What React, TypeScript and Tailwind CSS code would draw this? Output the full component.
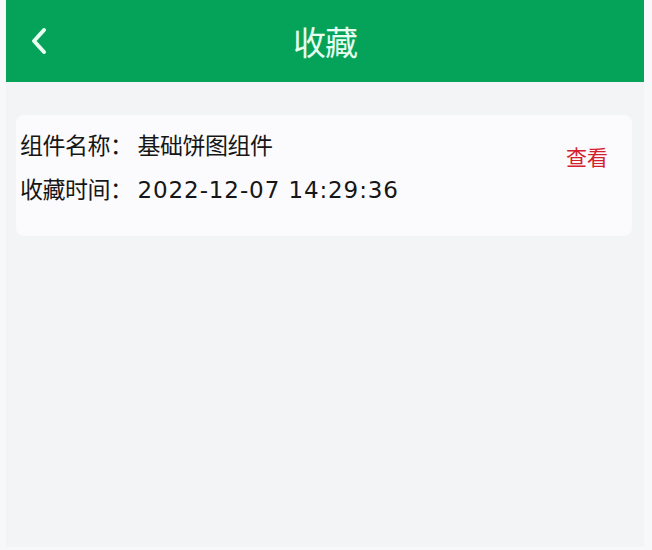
export default function App() {
  return (
    <div className="w-[652px] h-[550px] bg-[#f7f8fa] pl-[6px] pr-[8px] pb-[3px] font-['Noto_Sans_CJK_SC',sans-serif]">
      <div className="flex flex-col h-full bg-[#f3f4f6]">
        <header className="relative flex items-center justify-center h-[82px] bg-[#05a35a] shrink-0">
          <button className="absolute left-[21px] top-[26px] text-[#eafff2]">
            <svg width="24" height="30" viewBox="0 0 24 30" fill="none">
              <path
                d="M17 4 L7 15 L17 26"
                stroke="currentColor"
                strokeWidth="4"
                strokeLinecap="round"
                strokeLinejoin="round"
              />
            </svg>
          </button>
          <h1 className="text-[33px] leading-none text-[#e6fff0] tracking-[-1px]">收藏</h1>
        </header>

        <main className="pl-[10px] pr-[12px] pt-[33px]">
          <div className="flex items-start justify-between h-[121px] rounded-[8px] bg-[#fbfbfd] pl-[4px] pr-[24px] pt-[14px]">
            <div className="flex flex-col gap-[14px] text-[23px] leading-[30px] text-[#161616] tracking-[-0.5px]">
              <p>
                组件名称：<span className="ml-[5px]">基础饼图组件</span>
              </p>
              <p>
                收藏时间：
                <span className="ml-[5px] font-['DejaVu_Sans',sans-serif] text-[23px] tracking-[0.9px]">
                  2022-12-07 14:29:36
                </span>
              </p>
            </div>
            <button className="mt-[17px] text-[21px] leading-none text-[#d4202c]">查看</button>
          </div>
        </main>
      </div>
    </div>
  );
}
